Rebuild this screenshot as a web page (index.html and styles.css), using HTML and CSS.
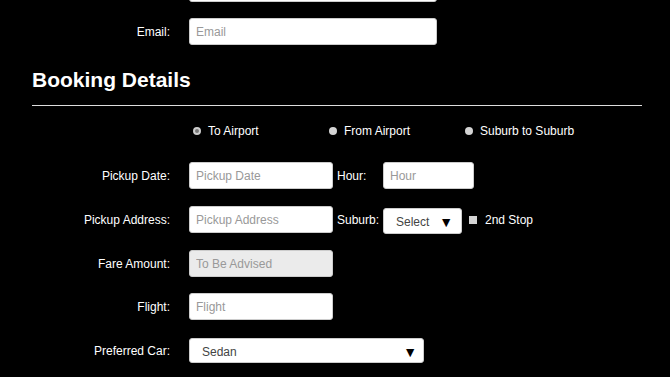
FILE: index.html
```html
<!DOCTYPE html>
<html lang="en">
<head>
  <meta charset="UTF-8">
  <meta name="viewport" content="width=device-width, initial-scale=1.0">
  <title>Booking</title>
  <link rel="stylesheet" href="styles.css">
</head>
<body>
  <div class="form">
    <div class="row row-cut">
      <label class="label"></label>
      <input type="text" class="field wide" placeholder="Phone">
    </div>
    <div class="row row-email">
      <label class="label" for="email">Email:</label>
      <input type="text" id="email" class="field wide" placeholder="Email">
    </div>

    <h2>Booking Details</h2>
    <div class="rule"></div>

    <div class="radios">
      <div class="radio"><span class="dot checked"></span>To Airport</div>
      <div class="radio"><span class="dot"></span>From Airport</div>
      <div class="radio"><span class="dot"></span>Suburb to Suburb</div>
    </div>

    <div class="row row-first">
      <label class="label" for="date">Pickup Date:</label>
      <input type="text" id="date" class="field short" placeholder="Pickup Date">
      <label class="mini-label" for="hour">Hour:</label>
      <input type="text" id="hour" class="field hour" placeholder="Hour">
    </div>

    <div class="row">
      <label class="label" for="address">Pickup Address:</label>
      <input type="text" id="address" class="field short" placeholder="Pickup Address">
      <label class="mini-label">Suburb:</label>
      <div class="select suburb"><span>Select</span><span class="arrow">&#9660;</span></div>
      <span class="check"></span>
      <span class="check-text">2nd Stop</span>
    </div>

    <div class="row">
      <label class="label" for="fare">Fare Amount:</label>
      <input type="text" id="fare" class="field short" placeholder="To Be Advised" disabled>
    </div>

    <div class="row row-tight">
      <label class="label" for="flight">Flight:</label>
      <input type="text" id="flight" class="field short" placeholder="Flight">
    </div>

    <div class="row">
      <label class="label">Preferred Car:</label>
      <div class="select car"><span>Sedan</span><span class="arrow">&#9660;</span></div>
    </div>
  </div>
</body>
</html>
```

FILE: styles.css
```css
body {
  margin: 0;
  background: #000;
  color: #fff;
  font-family: "Liberation Sans", Arial, sans-serif;
  font-size: 12px;
}
.form {
  padding: 0 28px 0 32px;
}
.row {
  display: flex;
  align-items: center;
  height: 27px;
  margin-top: 17px;
}
.row-cut {
  margin-top: -25px;
}
.row-email {
  margin-top: 16px;
}
.row-first {
  margin-top: 23px;
}
.row-tight {
  margin-top: 16px;
}
.label {
  width: 138px;
  padding-right: 19px;
  text-align: right;
  flex-shrink: 0;
}
.field {
  box-sizing: border-box;
  height: 27px;
  border: 1px solid #ccc;
  border-radius: 3px;
  padding: 0 6px;
  font-family: inherit;
  font-size: 12px;
  color: #555;
  background: #fff;
}
.field::placeholder {
  color: #999;
}
.field:disabled {
  background: #ebebeb;
}
.wide {
  width: 248px;
}
.short {
  width: 144px;
}
.hour {
  width: 91px;
}
.mini-label {
  width: 46px;
  margin-left: 4px;
}
h2 {
  margin: 23px 0 0;
  font-size: 21px;
  line-height: 24px;
}
.rule {
  height: 1px;
  background: #ddd;
  margin-top: 13px;
}
.radios {
  display: flex;
  height: 16px;
  margin-top: 17px;
  padding-left: 161px;
}
.radio {
  width: 136px;
  display: flex;
  align-items: center;
}
.dot {
  width: 8px;
  height: 8px;
  border-radius: 50%;
  background: #d4d4d4;
  margin-right: 7px;
  box-sizing: border-box;
}
.dot.checked {
  background: #777;
  border: 2px solid #ccc;
}
.select {
  box-sizing: border-box;
  display: flex;
  align-items: center;
  justify-content: space-between;
  background: #fff;
  color: #444;
  border: 1px solid #ccc;
  border-radius: 3px;
  padding: 2px 8px 0 12px;
}
.arrow {
  color: #000;
  font-size: 14px;
  line-height: 1;
}
.suburb {
  width: 79px;
  height: 26px;
  margin-top: 2px;
  padding-right: 8px;
}
.car {
  width: 235px;
  height: 25px;
  padding-right: 6px;
}
.check {
  width: 8px;
  height: 8px;
  background: #d4d4d4;
  margin: 0 8px 0 7px;
}
```
